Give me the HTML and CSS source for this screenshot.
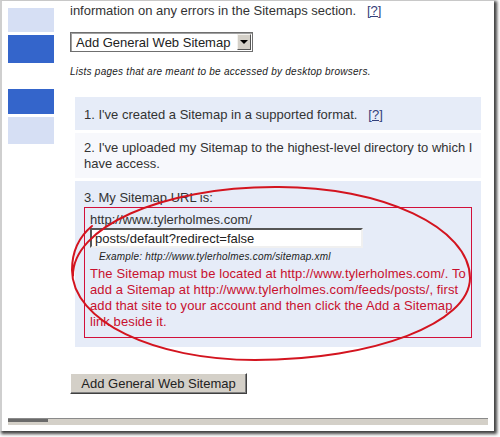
FILE: index.html
```html
<!DOCTYPE html>
<html lang="en">
<head>
    <meta charset="UTF-8">
    <title>Sitemaps - Add General Web Sitemap</title>
    <link rel="stylesheet" href="styles.css">
</head>
<body>
    <div class="frame">
        <div class="page">
            <div class="tabs">
                <div class="tab tab-light tab-first"></div>
                <div class="tab tab-dark tab-second"></div>
                <div class="tab tab-dark tab-third"></div>
                <div class="tab tab-light tab-fourth"></div>
            </div>

            <div class="main">
                <p class="intro">information on any errors in the Sitemaps section. &nbsp; <a href="#">[?]</a></p>

                <div class="select-wrap">
                    <select class="type-select">
                        <option>Add General Web Sitemap</option>
                    </select>
                    <span class="select-arrow"></span>
                </div>

                <p class="hint">Lists pages that are meant to be accessed by desktop browsers.</p>

                <div class="steps">
                    <div class="step">1. I've created a Sitemap in a supported format. &nbsp; <a href="#">[?]</a></div>
                    <div class="step step-alt">2. I've uploaded my Sitemap to the highest-level directory to which I have access.</div>
                    <div class="step step-url">
                        3. My Sitemap URL is:
                        <div class="url-box">
                            <div class="url-prefix">http://www.tylerholmes.com/</div>
                            <input type="text" class="url-input" value="posts/default?redirect=false">
                            <div class="example">Example: http://www.tylerholmes.com/sitemap.xml</div>
                            <div class="error-msg">
                                The Sitemap must be located at http://www.tylerholmes.com/. To<br>
                                add a Sitemap at http://www.tylerholmes.com/feeds/posts/, first<br>
                                add that site to your account and then click the Add a Sitemap<br>
                                link beside it.
                            </div>
                        </div>
                    </div>
                </div>

                <button class="add-btn">Add General Web Sitemap</button>
            </div>
        </div>

        <div class="hscroll">
            <div class="hscroll-thumb"></div>
        </div>
    </div>

    <!-- hand drawn marker round the error -->
    <svg class="marker" width="500" height="437" viewBox="0 0 500 437">
        <path d="M 73 276 C 72 228, 160 187, 275 187 C 383 186, 470 228, 470 278 C 470 323, 374 360, 255 360 C 154 360, 72 321, 72 270 C 72 250, 80 236, 92 226"
              fill="none" stroke="#d3141f" stroke-width="2" stroke-linecap="round"/>
    </svg>
</body>
</html>
```

FILE: styles.css
```css
* {
    margin: 0;
    padding: 0;
    box-sizing: border-box;
}

body {
    position: relative;
    width: 500px;
    height: 437px;
    background: white;
    font-family: 'Liberation Sans', Arial, sans-serif;
    font-size: 13px;
    color: #333;
    overflow: hidden;
}

.frame {
    width: 494px;
    height: 431px;
    display: flex;
    flex-direction: column;
    background: white;
    border-top: 1px solid #c8c8c8;
    border-left: 2px solid #cfcfcf;
    box-shadow: 2px 2px 3px 1px rgba(0, 0, 0, 0.75);
    overflow: hidden;
}

.page {
    flex: 1;
    display: flex;
    align-items: flex-start;
}

.tabs {
    width: 52px;
    padding: 7px 0 0 6px;
    display: flex;
    flex-direction: column;
    gap: 3px;
}

.tab {
    width: 46px;
}

.tab-light {
    background: #d6dff4;
}

.tab-dark {
    background: #3465cb;
}

.tab-first { height: 24px; }
.tab-second { height: 28px; }
.tab-third { height: 25px; margin-top: 23px; }
.tab-fourth { height: 27px; }

.main {
    margin-left: 16px;
    padding-top: 2px;
}

.intro {
    line-height: 16px;
    white-space: nowrap;
}

a {
    color: #34407a;
}

.select-wrap {
    position: relative;
    width: 183px;
    height: 20px;
    margin-top: 13px;
}

.type-select {
    appearance: none;
    -webkit-appearance: none;
    width: 100%;
    height: 20px;
    padding: 0 0 0 5px;
    font-family: inherit;
    font-size: 13px;
    color: #222;
    background: white;
    border: 1px solid #6f6f6f;
    border-radius: 0;
    box-shadow: inset 1px 1px 0 #a0a0a0;
}

.select-arrow {
    position: absolute;
    top: 2px;
    right: 2px;
    width: 14px;
    height: 16px;
    background: #d4d0c8;
    border: 1px solid;
    border-color: #f4f2ee #555 #555 #f4f2ee;
    display: flex;
    align-items: center;
    justify-content: center;
}

.select-arrow::after {
    content: '';
    border-top: 4px solid #000;
    border-left: 4px solid transparent;
    border-right: 4px solid transparent;
}

.hint {
    margin-top: 14px;
    font-size: 10px;
    line-height: 12px;
    font-style: italic;
    letter-spacing: 0.25px;
    color: #222;
}

.steps {
    width: 406px;
    margin: 19px 0 0 5px;
    display: flex;
    flex-direction: column;
    gap: 3px;
}

.step {
    background: #e6ecf8;
    padding: 10px 4px 7px 9px;
    line-height: 16px;
}

.step-alt {
    background: #f7f8fc;
    padding: 7px 4px 6px 9px;
}

.step-url {
    padding: 9px 9px 9px;
}

.url-box {
    margin-top: 1px;
    border: 1px solid #d2103a;
    padding: 4px 5px 7px;
}

.url-input {
    display: block;
    width: 273px;
    height: 20px;
    padding: 0 3px;
    font-family: inherit;
    font-size: 13px;
    color: #222;
    background: white;
    border: 2px solid;
    border-color: #555 #f0f0f0 #f0f0f0 #555;
    outline: none;
}

.example {
    margin-top: 3px;
    padding-left: 9px;
    font-size: 10px;
    line-height: 12px;
    font-style: italic;
    letter-spacing: 0.2px;
    color: #222;
}

.error-msg {
    margin-top: 3px;
    color: #c8102e;
    letter-spacing: 0.1px;
    white-space: nowrap;
}

.add-btn {
    display: block;
    margin-top: 26px;
    width: 177px;
    height: 21px;
    font-family: inherit;
    font-size: 13px;
    color: #222;
    background: #d4d0c8;
    border: 1px solid;
    border-color: #fff #404040 #404040 #fff;
    box-shadow: inset -1px -1px 0 #808080;
}

.hscroll {
    position: relative;
    width: 480px;
    height: 7px;
    margin: 0 0 6px 6px;
    background: #d4d0c8;
    border-top: 1px solid #8a8a8a;
}

.hscroll-thumb {
    width: 40px;
    height: 3px;
    background: #6a6a6a;
}

.marker {
    position: absolute;
    top: 0;
    left: 0;
    pointer-events: none;
}
```
